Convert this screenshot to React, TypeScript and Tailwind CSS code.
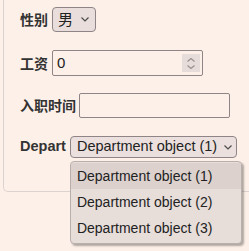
import React from 'react';

const sans = "font-['Liberation_Sans','Noto_Sans_CJK_SC',sans-serif]";
const cjk = "font-['Noto_Sans_CJK_SC',sans-serif]";

function Chevron({ className = '' }: { className?: string }) {
  return (
    <svg width="8" height="5" viewBox="0 0 8 5" className={className}>
      <path d="M0.5 0.5 L4 4 L7.5 0.5" fill="none" stroke="#4b4b4b" strokeWidth="1.2" />
    </svg>
  );
}

const options = ['Department object (1)', 'Department object (2)', 'Department object (3)'];

export default function App() {
  return (
    <div className={`w-[249px] h-[251px] bg-[#fdf0e8] overflow-hidden ${sans}`}>
      <div className="ml-[3px] border-l border-b border-[#dcd2cf] rounded-bl-[5px] pl-[16px] pb-[33px]">
        <div className="flex items-center gap-[4px] pt-[7px] h-[32px]">
          <span className={`${cjk} text-[14px] font-bold text-[#333]`}>性别</span>
          <div className="flex items-center h-[25px] w-[44px] pl-[5px] border border-[#8f8587] rounded-[4px] bg-[#e9dedb]">
            <span className={`${cjk} text-[15px] text-[#222]`}>男</span>
            <Chevron className="ml-[8px]" />
          </div>
        </div>
        <div className="flex items-center gap-[4px] mt-[18px] h-[26px]">
          <span className={`${cjk} text-[14px] font-bold text-[#333]`}>工资</span>
          <div className="flex items-center h-[26px] w-[151px] pl-[4px] pr-[2px] border border-[#8f8587] rounded-[2px] bg-[#fdf0e8]">
            <span className="text-[15px] text-[#222] flex-1">0</span>
            <div className="w-[18px] h-[18px] bg-[#e6dcd9] flex flex-col items-center justify-center gap-[3px]">
              <svg width="8" height="4" viewBox="0 0 8 4">
                <path d="M0.5 3.5 L4 0.5 L7.5 3.5" fill="none" stroke="#9a9090" strokeWidth="1.2" />
              </svg>
              <svg width="8" height="4" viewBox="0 0 8 4">
                <path d="M0.5 0.5 L4 3.5 L7.5 0.5" fill="none" stroke="#9a9090" strokeWidth="1.2" />
              </svg>
            </div>
          </div>
        </div>
        <div className="flex items-center gap-[3px] mt-[17px] h-[25px]">
          <span className={`${cjk} text-[14px] font-bold text-[#333]`}>入职时间</span>
          <div className="h-[25px] w-[151px] border border-[#8f8587] rounded-[2px] bg-[#fdf0e8]" />
        </div>
        <div className="flex items-center gap-[4px] mt-[18px] h-[22px]">
          <span className="text-[14.5px] font-bold text-[#333] whitespace-nowrap">Depart</span>
          <div className="relative shrink-0 flex items-center h-[22px] w-[167px] pl-[6px] border border-[#8f8587] rounded-[4px] bg-[#ebe0dd]">
            <span className="text-[14.5px] text-[#222] whitespace-nowrap">Department object (1)</span>
            <Chevron className="ml-[7px] shrink-0" />
            <div className="absolute -left-px top-[24px] w-[172px] h-[83px] border border-[#b9afad] rounded-[4px] bg-[#e7ddd9] shadow-[2px_2px_2px_rgba(0,0,0,0.3)] py-[1px] overflow-hidden">
              {options.map((o, i) => (
                <div
                  key={o}
                  className={`h-[26px] flex items-center pl-[6px] text-[14px] text-[#222] whitespace-nowrap ${i === 0 ? 'bg-[#dcd1cd]' : ''}`}
                >
                  {o}
                </div>
              ))}
            </div>
          </div>
        </div>
      </div>
    </div>
  );
}
